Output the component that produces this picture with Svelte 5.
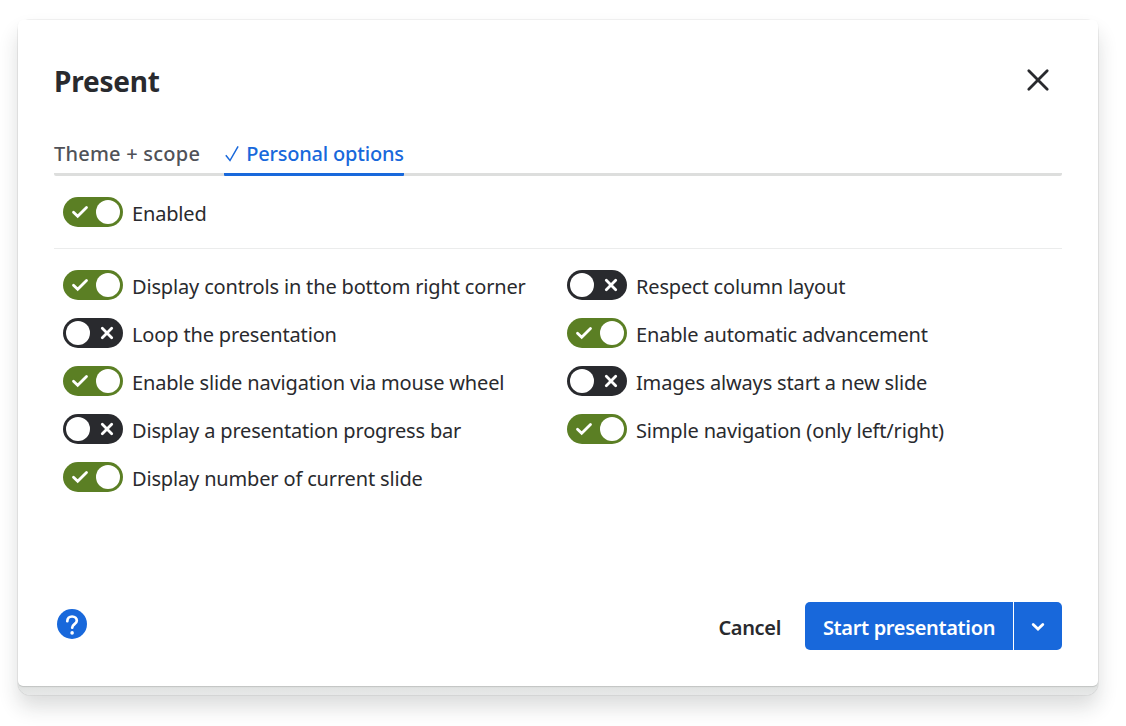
<script lang="ts">
	type Option = { id: string; label: string; on: boolean };

	let enabled = $state(true);
	let activeTab = $state('personal');

	let columns = $state<Option[][]>([
		[
			{ id: 'controls', label: 'Display controls in the bottom right corner', on: true },
			{ id: 'loop', label: 'Loop the presentation', on: false },
			{ id: 'wheel', label: 'Enable slide navigation via mouse wheel', on: true },
			{ id: 'progress', label: 'Display a presentation progress bar', on: false },
			{ id: 'number', label: 'Display number of current slide', on: true },
		],
		[
			{ id: 'columns', label: 'Respect column layout', on: false },
			{ id: 'auto', label: 'Enable automatic advancement', on: true },
			{ id: 'images', label: 'Images always start a new slide', on: false },
			{ id: 'simple', label: 'Simple navigation (only left/right)', on: true },
		],
	]);
</script>

{#snippet toggle(label: string, on: boolean, flip: () => void)}
	<button class="option" type="button" role="switch" aria-checked={on} onclick={flip}>
		<svg class="toggle" class:on width="60" height="30" viewBox="0 0 60 30" aria-hidden="true">
			<rect class="track" width="60" height="30" rx="15" />
			{#if on}
				<circle cx="45" cy="15" r="12" fill="#fff" />
				<path class="mark" d="M10.5 15.2l4.2 4.1 8.8-8.8" />
			{:else}
				<circle cx="15" cy="15" r="12" fill="#fff" />
				<path class="mark" d="M39.3 10.3l9.4 9.4M48.7 10.3l-9.4 9.4" />
			{/if}
		</svg>
		<span class="label">{label}</span>
	</button>
{/snippet}

<div class="page">
	<div class="shell">
		<div class="dialog" role="dialog" aria-labelledby="title">
			<header>
				<h1 id="title">Present</h1>
				<button class="close" type="button" aria-label="Close">
					<svg width="24" height="24" viewBox="0 0 24 24">
						<path d="M2.8 2.8l18.4 18.4M21.2 2.8L2.8 21.2" />
					</svg>
				</button>
			</header>

			<div class="tabs" role="tablist">
				<button
					class="tab tab-theme"
					class:active={activeTab === 'theme'}
					type="button"
					role="tab"
					aria-selected={activeTab === 'theme'}
					onclick={() => (activeTab = 'theme')}>Theme + scope</button
				>
				<button
					class="tab"
					class:active={activeTab === 'personal'}
					type="button"
					role="tab"
					aria-selected={activeTab === 'personal'}
					onclick={() => (activeTab = 'personal')}
				>
					<svg width="16" height="18" viewBox="0 0 16 18" aria-hidden="true">
						<path d="M1.8 10.3l4.2 5.2L14.1 1.3" />
					</svg>
					<span>Personal options</span>
				</button>
			</div>

			<div class="enabled">
				{@render toggle('Enabled', enabled, () => (enabled = !enabled))}
			</div>

			<div class="options">
				{#each columns as column}
					<div class="column">
						{#each column as option (option.id)}
							{@render toggle(option.label, option.on, () => (option.on = !option.on))}
						{/each}
					</div>
				{/each}
			</div>

			<footer>
				<button class="help" type="button" aria-label="Help">
					<svg width="30" height="30" viewBox="0 0 30 30">
						<circle cx="15" cy="15" r="15" fill="#1868db" />
						<path d="M10.3 12.2c0-2.9 2-4.7 4.8-4.7s4.7 1.8 4.7 4.3c0 3.4-4.6 3.4-4.6 6.9" />
						<circle cx="15.1" cy="23.9" r="1.8" fill="#fff" />
					</svg>
				</button>
				<button class="cancel" type="button">Cancel</button>
				<div class="split">
					<button class="start" type="button">Start presentation</button>
					<button class="more" type="button" aria-label="More options">
						<svg width="14" height="10" viewBox="0 0 14 10">
							<path d="M2.2 2.5L7 7.1l4.8-4.6" />
						</svg>
					</button>
				</div>
			</footer>
		</div>
	</div>
</div>

<style>
	:global(body) {
		background: #fff;
	}
	.page {
		box-sizing: border-box;
		height: 726px;
		padding: 20px 28px 0 18px;
		overflow: hidden;
	}
	.shell {
		box-sizing: border-box;
		height: 675px;
		border-radius: 12px;
		background: linear-gradient(#e0e2e1 666px, #e7e8e8);
		box-shadow:
			0 0 1px rgba(30, 31, 33, 0.5),
			0 12px 20px rgba(30, 40, 36, 0.16);
	}
	.dialog {
		box-sizing: border-box;
		display: flex;
		flex-direction: column;
		height: 666px;
		padding: 36px;
		border-radius: 5px;
		background: #fff;
		box-shadow: 0 1px 1px rgba(30, 31, 33, 0.16);
		color: #292a2e;
		font-family: 'Segoe UI', 'Noto Sans', sans-serif;
		font-size: 20px;
	}
	button {
		padding: 0;
		border: 0;
		background: none;
		color: inherit;
		font: inherit;
		letter-spacing: inherit;
		white-space: nowrap;
		cursor: pointer;
	}
	svg {
		display: block;
		flex: none;
	}
	header {
		display: flex;
		justify-content: space-between;
		align-items: center;
		height: 48px;
	}
	h1 {
		margin: 1px 0 0;
		font-size: 28px;
		font-weight: 700;
		line-height: 36px;
		letter-spacing: -0.2px;
	}
	.close {
		display: grid;
		place-items: center;
		width: 48px;
		height: 48px;
	}
	.close path {
		stroke: #292a2e;
		stroke-width: 2.8;
		stroke-linecap: round;
	}
	.tabs {
		display: flex;
		gap: 24px;
		height: 41px;
		margin-top: 28px;
		border-bottom: 3px solid #dddedd;
		border-radius: 2px;
	}
	.tab {
		display: flex;
		align-items: center;
		gap: 6px;
		box-sizing: border-box;
		height: 44px;
		padding-top: 2px;
		border-bottom: 3px solid transparent;
		color: #505258;
		font-weight: 500;
		letter-spacing: -0.2px;
	}
	.tab-theme {
		letter-spacing: 0.23px;
	}
	.tab.active {
		border-bottom-color: #1868db;
		border-radius: 1px;
		color: #1868db;
	}
	.tab path {
		fill: none;
		stroke: currentColor;
		stroke-width: 1.5;
	}
	.enabled {
		padding: 12px 0;
		border-bottom: 1px solid #ebecec;
	}
	.options {
		display: grid;
		grid-template-columns: 1fr 1fr;
		padding-top: 12px;
	}
	.column {
		display: flex;
		flex-direction: column;
	}
	.option {
		display: flex;
		align-items: center;
		gap: 9px;
		height: 48px;
		padding-left: 9px;
	}
	.label {
		padding-top: 2px;
		letter-spacing: -0.16px;
	}
	.track {
		fill: #292a2e;
	}
	.on .track {
		fill: #5b7f24;
	}
	.mark {
		fill: none;
		stroke: #fff;
		stroke-width: 2.8;
		stroke-linecap: round;
	}
	footer {
		display: flex;
		align-items: center;
		height: 48px;
		margin-top: auto;
		font-weight: 600;
		letter-spacing: -0.34px;
	}
	.help {
		margin: 0 auto 4px 3px;
	}
	.help path {
		fill: none;
		stroke: #fff;
		stroke-width: 2.7;
		stroke-linecap: round;
	}
	.cancel {
		margin-right: 24px;
		padding-top: 2px;
	}
	.split {
		display: flex;
		gap: 1px;
		height: 48px;
		border-radius: 5px;
		overflow: hidden;
		color: #fff;
	}
	.start,
	.more {
		background: #1868db;
	}
	.start {
		width: 208px;
		padding-top: 2px;
	}
	.more {
		display: grid;
		place-items: center;
		width: 48px;
		padding-top: 2px;
	}
	.more path {
		fill: none;
		stroke: #fff;
		stroke-width: 2.8;
		stroke-linecap: round;
	}
</style>
